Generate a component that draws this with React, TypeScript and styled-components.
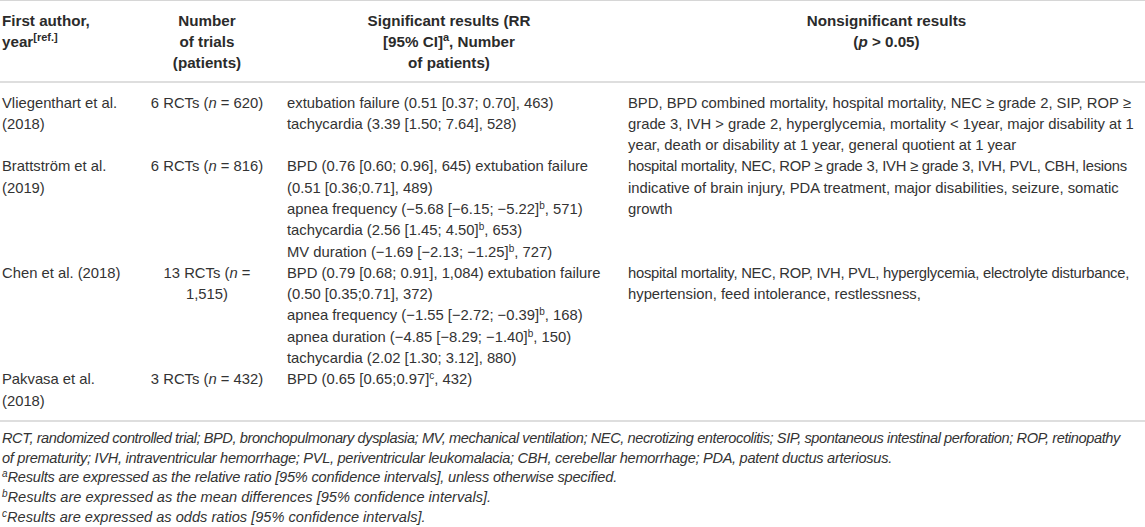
import React from "react";
import styled, { createGlobalStyle } from "styled-components";

const Global = createGlobalStyle`
  html, body { margin: 0; padding: 0; background: #ffffff; }
  body { font-family: "Liberation Sans", Arial, Helvetica, sans-serif; color: #333333; }
`;

const COLS = "142px 126px 341px 1fr";

const Page = styled.div`
  width: 1145px;
  overflow: hidden;
  padding-left: 2px;
  box-sizing: border-box;
`;

const HeaderRow = styled.div`
  display: grid;
  grid-template-columns: ${COLS};
  border-top: 1px solid #d6d6d6;
  margin-left: -2px;
  padding: 9px 0 8px 2px;
`;

const HeadCell = styled.div<{ $align?: "left" | "center"; $indent?: boolean }>`
  font-weight: 700;
  font-size: 15.2px;
  line-height: 21px;
  color: #2b2b2b;
  text-align: ${(p) => p.$align || "left"};
  padding-left: ${(p) => (p.$indent ? "17px" : "0")};
  white-space: nowrap;
`;

const Body = styled.div`
  border-top: 2px solid #dedede;
  border-bottom: 2px solid #dedede;
  margin-left: -2px;
  padding: 9.5px 0 8px 2px;
`;

const Row = styled.div`
  display: grid;
  grid-template-columns: ${COLS};
`;

const Cell = styled.div<{ $align?: "left" | "center"; $indent?: boolean }>`
  font-size: 14.8px;
  line-height: 21.3px;
  text-align: ${(p) => p.$align || "left"};
  padding-left: ${(p) => (p.$indent ? "17px" : "0")};
  white-space: nowrap;
`;

const Line = styled.div<{ $squeeze?: number }>`
  letter-spacing: ${(p) => (p.$squeeze ? `${-p.$squeeze}px` : "normal")};
`;

const Sup = styled.sup<{ $size?: number }>`
  font-size: ${(p) => p.$size || 10}px;
  line-height: 0;
  vertical-align: ${(p) => (p.$size && p.$size > 10 ? "6px" : "5px")};
`;

const Em = styled.i`
  font-style: italic;
`;

const Notes = styled.div`
  padding-top: 7px;
  font-style: italic;
  font-size: 14.6px;
  line-height: 19.75px;
  white-space: nowrap;
`;

const NoteLine = styled.div<{ $squeeze?: number }>`
  letter-spacing: ${(p) => (p.$squeeze ? `${-p.$squeeze}px` : "normal")};
`;

type Txt = React.ReactNode | { text: React.ReactNode; squeeze: number };

interface Study {
  author: string[];
  trials: React.ReactNode[];
  sig: Txt[];
  nonsig: Txt[];
}

const b = <Sup>b</Sup>;

const studies: Study[] = [
  {
    author: ["Vliegenthart et al.", "(2018)"],
    trials: [<>6 RCTs (<Em>n</Em> = 620)</>],
    sig: ["extubation failure (0.51 [0.37; 0.70], 463)", "tachycardia (3.39 [1.50; 7.64], 528)"],
    nonsig: [
      "BPD, BPD combined mortality, hospital mortality, NEC ≥ grade 2, SIP, ROP ≥",
      "grade 3, IVH > grade 2, hyperglycemia, mortality < 1year, major disability at 1",
      "year, death or disability at 1 year, general quotient at 1 year",
    ],
  },
  {
    author: ["Brattström et al.", "(2019)"],
    trials: [<>6 RCTs (<Em>n</Em> = 816)</>],
    sig: [
      "BPD (0.76 [0.60; 0.96], 645) extubation failure",
      "(0.51 [0.36;0.71], 489)",
      <>apnea frequency (−5.68 [−6.15; −5.22]{b}, 571)</>,
      <>tachycardia (2.56 [1.45; 4.50]{b}, 653)</>,
      <>MV duration (−1.69 [−2.13; −1.25]{b}, 727)</>,
    ],
    nonsig: [
      { text: "hospital mortality, NEC, ROP ≥ grade 3, IVH ≥ grade 3, IVH, PVL, CBH, lesions", squeeze: 0.25 },
      "indicative of brain injury, PDA treatment, major disabilities, seizure, somatic",
      "growth",
    ],
  },
  {
    author: ["Chen et al. (2018)"],
    trials: [<>13 RCTs (<Em>n</Em> =</>, "1,515)"],
    sig: [
      "BPD (0.79 [0.68; 0.91], 1,084) extubation failure",
      "(0.50 [0.35;0.71], 372)",
      <>apnea frequency (−1.55 [−2.72; −0.39]{b}, 168)</>,
      <>apnea duration (−4.85 [−8.29; −1.40]{b}, 150)</>,
      "tachycardia (2.02 [1.30; 3.12], 880)",
    ],
    nonsig: [
      { text: "hospital mortality, NEC, ROP, IVH, PVL, hyperglycemia, electrolyte disturbance,", squeeze: 0.25 },
      "hypertension, feed intolerance, restlessness,",
    ],
  },
  {
    author: ["Pakvasa et al.", "(2018)"],
    trials: [<>3 RCTs (<Em>n</Em> = 432)</>],
    sig: [<>BPD (0.65 [0.65;0.97]<Sup>c</Sup>, 432)</>],
    nonsig: [],
  },
];

const isSqueezed = (t: Txt): t is { text: React.ReactNode; squeeze: number } =>
  typeof t === "object" && t !== null && !React.isValidElement(t) && "squeeze" in (t as object);

const lines = (items: Txt[]) =>
  items.map((t, i) =>
    isSqueezed(t) ? (
      <Line key={i} $squeeze={t.squeeze}>
        {t.text}
      </Line>
    ) : (
      <Line key={i}>{t as React.ReactNode}</Line>
    )
  );

export default function App() {
  return (
    <Page>
      <Global />
      <HeaderRow>
        <HeadCell>
          <Line>First author,</Line>
          <Line>
            year<Sup $size={11}>[ref.]</Sup>
          </Line>
        </HeadCell>
        <HeadCell $align="center">
          <Line>Number</Line>
          <Line>of trials</Line>
          <Line>(patients)</Line>
        </HeadCell>
        <HeadCell $align="center" $indent>
          <Line>Significant results (RR</Line>
          <Line>
            [95% CI]<Sup $size={11}>a</Sup>, Number
          </Line>
          <Line>of patients)</Line>
        </HeadCell>
        <HeadCell $align="center" $indent>
          <Line>Nonsignificant results</Line>
          <Line>
            (<Em>p</Em> &gt; 0.05)
          </Line>
        </HeadCell>
      </HeaderRow>
      <Body>
        {studies.map((s, i) => (
          <Row key={i}>
            <Cell>{lines(s.author)}</Cell>
            <Cell $align="center">{lines(s.trials)}</Cell>
            <Cell $indent>{lines(s.sig)}</Cell>
            <Cell $indent>{lines(s.nonsig)}</Cell>
          </Row>
        ))}
      </Body>
      <Notes>
        <NoteLine $squeeze={0.42}>
          RCT, randomized controlled trial; BPD, bronchopulmonary dysplasia; MV, mechanical ventilation; NEC,
          necrotizing enterocolitis; SIP, spontaneous intestinal perforation; ROP, retinopathy
        </NoteLine>
        <NoteLine $squeeze={0.3}>
          of prematurity; IVH, intraventricular hemorrhage; PVL, periventricular leukomalacia; CBH, cerebellar
          hemorrhage; PDA, patent ductus arteriosus.
        </NoteLine>
        <NoteLine $squeeze={0.2}>
          <Sup>a</Sup>Results are expressed as the relative ratio [95% confidence intervals], unless otherwise
          specified.
        </NoteLine>
        <NoteLine>
          <Sup>b</Sup>Results are expressed as the mean differences [95% confidence intervals].
        </NoteLine>
        <NoteLine>
          <Sup>c</Sup>Results are expressed as odds ratios [95% confidence intervals].
        </NoteLine>
      </Notes>
    </Page>
  );
}
